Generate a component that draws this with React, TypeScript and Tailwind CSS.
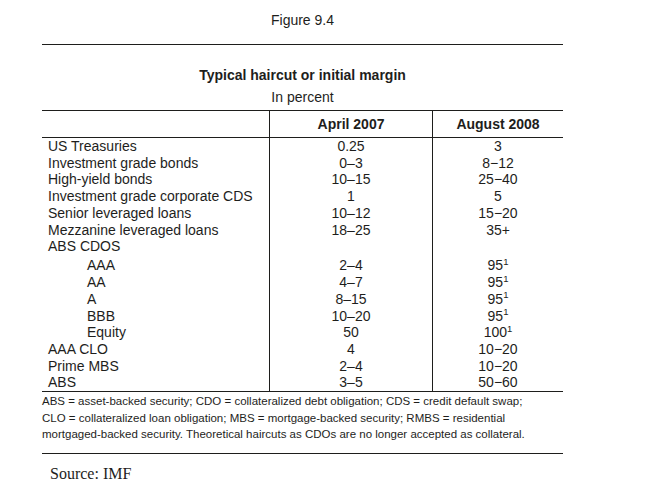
const rows: { label: string; a: string; b: string; sup?: boolean; indent?: boolean; gap?: boolean }[] = [
  { label: 'US Treasuries', a: '0.25', b: '3' },
  { label: 'Investment grade bonds', a: '0–3', b: '8−12' },
  { label: 'High-yield bonds', a: '10–15', b: '25−40' },
  { label: 'Investment grade corporate CDS', a: '1', b: '5' },
  { label: 'Senior leveraged loans', a: '10–12', b: '15−20' },
  { label: 'Mezzanine leveraged loans', a: '18–25', b: '35+' },
  { label: 'ABS CDOS', a: '', b: '', gap: true },
  { label: 'AAA', a: '2–4', b: '95', sup: true, indent: true },
  { label: 'AA', a: '4–7', b: '95', sup: true, indent: true },
  { label: 'A', a: '8–15', b: '95', sup: true, indent: true },
  { label: 'BBB', a: '10–20', b: '95', sup: true, indent: true },
  { label: 'Equity', a: '50', b: '100', sup: true, indent: true },
  { label: 'AAA CLO', a: '4', b: '10−20' },
  { label: 'Prime MBS', a: '2–4', b: '10−20' },
  { label: 'ABS', a: '3–5', b: '50−60' },
];

const sans = "font-['Liberation_Sans',Arial,sans-serif]";

export default function App() {
  return (
    <div className={`w-[649px] h-[490px] bg-white text-[#1e1e1c] ${sans}`}>
      <div className="ml-[42px] w-[521px]">
        <div className="pt-[12px] text-center text-[14px] leading-[17px]">Figure 9.4</div>
        <div className="mt-[15px] h-px bg-[#1e1e1c]" />

        <div className="mt-[22px] text-center text-[14px] leading-[17px] font-bold">Typical haircut or initial margin</div>
        <div className="mt-[5px] text-center text-[14px] leading-[17px]">In percent</div>

        {/* table */}
        <div className="mt-[4px] border-t border-b border-[#1e1e1c] text-[14px]">
          <div className="grid grid-cols-[227px_163px_131px] border-b border-[#1e1e1c] h-[27px] font-bold">
            <div />
            <div className="border-l border-[#1e1e1c] flex items-center justify-center">April 2007</div>
            <div className="border-l border-[#1e1e1c] flex items-center justify-center">August 2008</div>
          </div>
          {rows.map(r => {
            const pad = r.gap ? 'pb-[2.5px]' : '';
            return (
              <div key={r.label + r.a} className="grid grid-cols-[227px_163px_131px] leading-[16.7px]">
                <div className={`${r.indent ? 'pl-[45px]' : 'pl-[6px]'} ${pad}`}>{r.label}</div>
                <div className={`border-l border-[#1e1e1c] text-center ${pad}`}>{r.a}</div>
                <div className={`border-l border-[#1e1e1c] text-center ${pad}`}>
                  {r.b}
                  {r.sup && <sup className="text-[9.5px] relative -top-[5.5px]">1</sup>}
                </div>
              </div>
            );
          })}
        </div>

        <div className="text-[11.5px] leading-[16.7px] pt-px">
          <div>ABS = asset-backed security; CDO = collateralized debt obligation; CDS = credit default swap;</div>
          <div>CLO = collateralized loan obligation; MBS = mortgage-backed security; RMBS = residential</div>
          <div>mortgaged-backed security. Theoretical haircuts as CDOs are no longer accepted as collateral.</div>
        </div>

        <div className="mt-[10px] h-px bg-[#1e1e1c]" />
        <div className="mt-[10px] pl-[8px] text-[16px] leading-[19px] font-['Liberation_Serif','Times_New_Roman',serif]">Source: IMF</div>
      </div>
    </div>
  );
}
